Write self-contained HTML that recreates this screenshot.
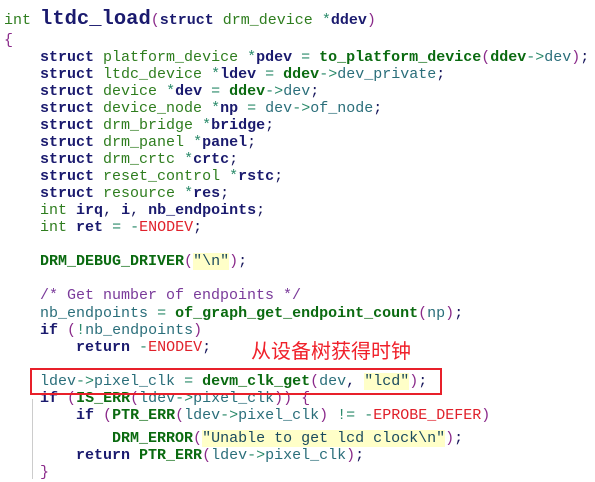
<!DOCTYPE html>
<html><head><meta charset="utf-8"><style>
html,body{margin:0;padding:0;background:#fff;width:595px;height:482px;overflow:hidden;position:relative}
.c{position:absolute;left:4px;font-family:"Liberation Mono",monospace;font-size:15px;color:#1a1a5e;letter-spacing:0}
.l{height:17.07px;line-height:17.07px;white-space:pre}
.k{color:#1a1a6e;font-weight:bold}
.t{color:#2e7d1e}
.v{color:#1a1a6e;font-weight:bold}
.f{color:#0a6a10;font-weight:bold}
.i{color:#2a6e7a}
.o{color:#2a8a6a}
.p{color:#8a2a8a}
.r{color:#e0202a}
.m{color:#7a3a9a}
.s{background:#ffffc8;color:#1a4a5e}
</style></head><body>
<div class="c" style="top:9px;line-height:22px;white-space:pre"><span class="t">int</span> <span class="v" style="font-size:20.5px">ltdc_load</span><span class="p">(</span><span class="k">struct</span> <span class="t">drm_device</span> <span class="o">*</span><span class="v">ddev</span><span class="p">)</span></div>
<div class="c" style="top:31.5px"><div class="l"><span class="p">{</span></div><div class="l">    <span class="k">struct</span> <span class="t">platform_device</span> <span class="o">*</span><span class="v">pdev</span> <span class="o">=</span> <span class="f">to_platform_device</span><span class="p">(</span><span class="f">ddev</span><span class="o">-&gt;</span><span class="i">dev</span><span class="p">)</span>;</div><div class="l">    <span class="k">struct</span> <span class="t">ltdc_device</span> <span class="o">*</span><span class="v">ldev</span> <span class="o">=</span> <span class="f">ddev</span><span class="o">-&gt;</span><span class="i">dev_private</span>;</div><div class="l">    <span class="k">struct</span> <span class="t">device</span> <span class="o">*</span><span class="v">dev</span> <span class="o">=</span> <span class="f">ddev</span><span class="o">-&gt;</span><span class="i">dev</span>;</div><div class="l">    <span class="k">struct</span> <span class="t">device_node</span> <span class="o">*</span><span class="v">np</span> <span class="o">=</span> <span class="i">dev</span><span class="o">-&gt;</span><span class="i">of_node</span>;</div><div class="l">    <span class="k">struct</span> <span class="t">drm_bridge</span> <span class="o">*</span><span class="v">bridge</span>;</div><div class="l">    <span class="k">struct</span> <span class="t">drm_panel</span> <span class="o">*</span><span class="v">panel</span>;</div><div class="l">    <span class="k">struct</span> <span class="t">drm_crtc</span> <span class="o">*</span><span class="v">crtc</span>;</div><div class="l">    <span class="k">struct</span> <span class="t">reset_control</span> <span class="o">*</span><span class="v">rstc</span>;</div><div class="l">    <span class="k">struct</span> <span class="t">resource</span> <span class="o">*</span><span class="v">res</span>;</div><div class="l">    <span class="t">int</span> <span class="v">irq</span>, <span class="v">i</span>, <span class="v">nb_endpoints</span>;</div><div class="l">    <span class="t">int</span> <span class="v">ret</span> <span class="o">=</span> <span class="o">-</span><span class="r">ENODEV</span>;</div><div class="l"> </div><div class="l">    <span class="f">DRM_DEBUG_DRIVER</span><span class="p">(</span><span class="s">"\n"</span><span class="p">)</span>;</div><div class="l"> </div><div class="l">    <span class="m">/* Get number of endpoints */</span></div><div class="l">    <span class="i">nb_endpoints</span> <span class="o">=</span> <span class="f">of_graph_get_endpoint_count</span><span class="p">(</span><span class="i">np</span><span class="p">)</span>;</div><div class="l">    <span class="k">if</span> <span class="p">(</span><span class="o">!</span><span class="i">nb_endpoints</span><span class="p">)</span></div><div class="l">        <span class="k">return</span> <span class="o">-</span><span class="r">ENODEV</span>;</div><div class="l"> </div><div class="l">    <span class="i">ldev</span><span class="o">-&gt;</span><span class="i">pixel_clk</span> <span class="o">=</span> <span class="f">devm_clk_get</span><span class="p">(</span><span class="i">dev</span>, <span class="s">"lcd"</span><span class="p">)</span>;</div><div class="l">    <span class="k">if</span> <span class="p">(</span><span class="f">IS_ERR</span><span class="p">(</span><span class="i">ldev</span><span class="o">-&gt;</span><span class="i">pixel_clk</span><span class="p">))</span> <span class="p">{</span></div><div class="l">        <span class="k">if</span> <span class="p">(</span><span class="f">PTR_ERR</span><span class="p">(</span><span class="i">ldev</span><span class="o">-&gt;</span><span class="i">pixel_clk</span><span class="p">)</span> <span class="o">!=</span> <span class="o">-</span><span class="r">EPROBE_DEFER</span><span class="p">)</span></div><div class="l" style="margin-top:6px">            <span class="f">DRM_ERROR</span><span class="p">(</span><span class="s">"Unable to get lcd clock\n"</span><span class="p">)</span>;</div><div class="l">        <span class="k">return</span> <span class="f">PTR_ERR</span><span class="p">(</span><span class="i">ldev</span><span class="o">-&gt;</span><span class="i">pixel_clk</span><span class="p">)</span>;</div><div class="l">    <span class="p">}</span></div></div>
<div style="position:absolute;left:30px;top:368px;width:408px;height:23px;border:2px solid #e8202a"></div>
<div style="position:absolute;left:32px;top:399px;width:1px;height:80px;background:#ccc"></div>
<div style="position:absolute;left:251px;top:340px;font-family:'Liberation Sans','Noto Sans CJK SC',sans-serif;font-size:20px;line-height:24px;color:#f0202a">从设备树获得时钟</div>
</body></html>
